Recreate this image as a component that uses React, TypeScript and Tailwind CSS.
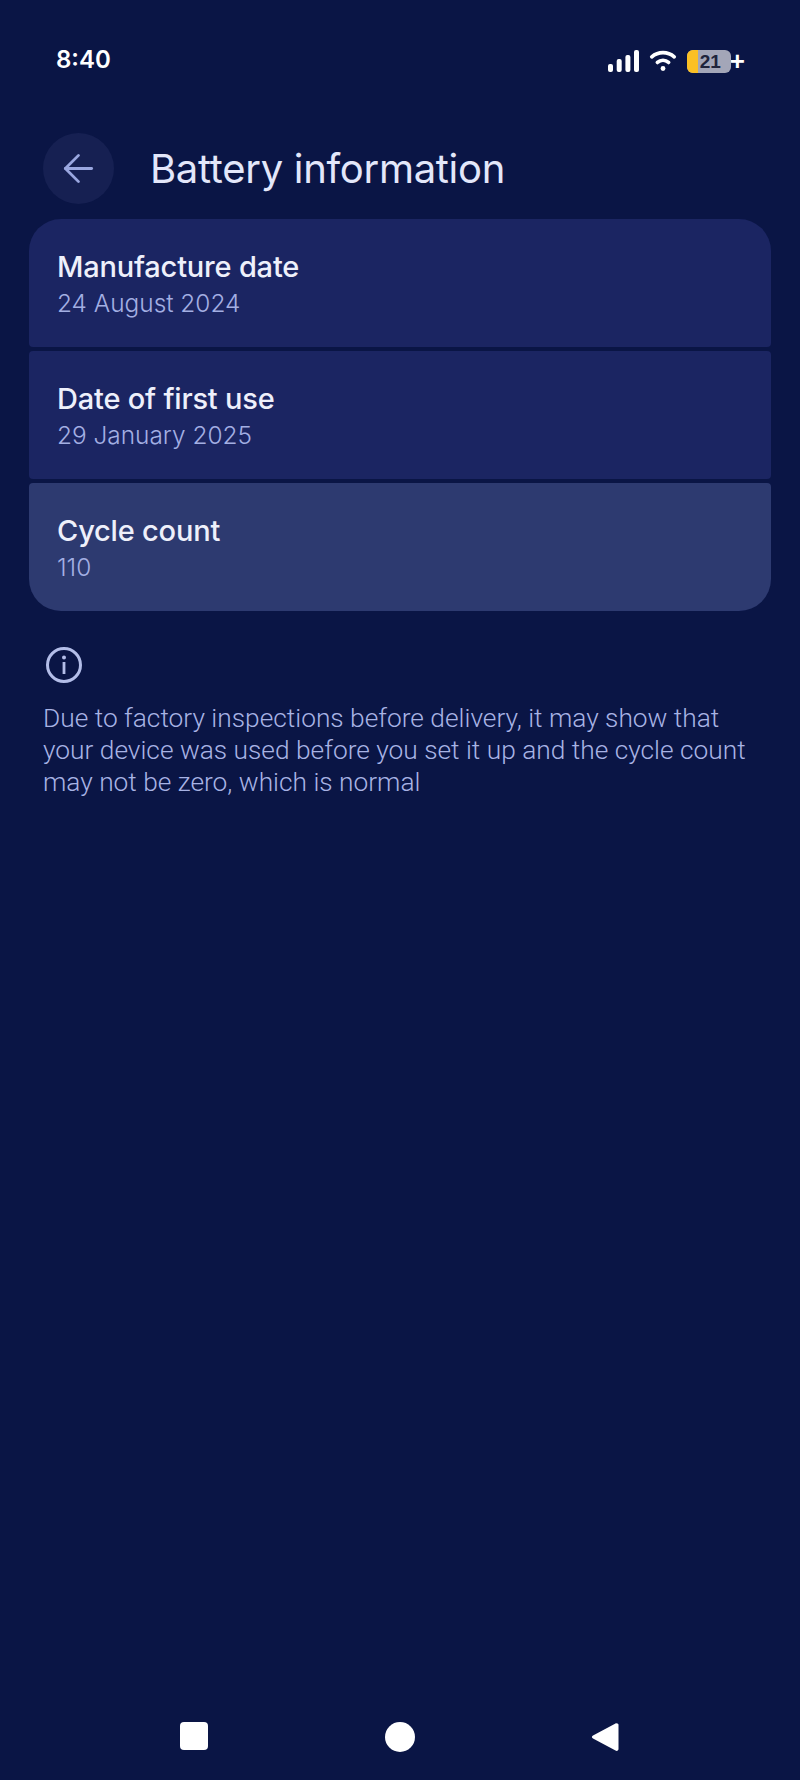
import { ArrowLeft } from "lucide-react";

const rows = [
  { title: "Manufacture date", value: "24 August 2024", shape: "rounded-t-[32px] rounded-b-[4px] bg-[#1b2562]" },
  { title: "Date of first use", value: "29 January 2025", shape: "rounded-[4px] bg-[#1b2562]" },
  { title: "Cycle count", value: "110", shape: "rounded-b-[32px] rounded-t-[4px] bg-[#2d3a70]" },
];

function StatusIcons() {
  return (
    <div className="flex items-center gap-[10px]">
      <svg width="31" height="24" viewBox="0 0 31 24" fill="#fff">
        <rect x="0" y="15" width="5" height="8" rx="2" />
        <rect x="8.7" y="10" width="5" height="13" rx="2" />
        <rect x="17.4" y="6" width="5" height="17" rx="2" />
        <rect x="26" y="1" width="5" height="22" rx="2" />
      </svg>
      <svg width="28" height="24" viewBox="0 0 30 24" fill="none" stroke="#fff" strokeWidth="4" strokeLinecap="round">
        <path d="M3 7.5C10 1.5 20 1.5 27 7.5" />
        <path d="M9 13.5C12.5 10.5 17.5 10.5 21 13.5" />
        <circle cx="15" cy="20" r="2.6" fill="#fff" stroke="none" />
      </svg>
      <div className="flex items-center">
        <div className="relative flex h-[23px] w-[44px] items-center justify-center overflow-hidden rounded-[6px] bg-[#a3a6b8]">
          <div className="absolute inset-y-0 left-0 w-[11px] bg-[#fbc024]" />
          <span className="relative pl-[3px] font-['Liberation_Sans',sans-serif] text-[19px] leading-none font-bold text-[#20243c]">21</span>
        </div>
        <span className="-ml-[1px] font-['Liberation_Sans',sans-serif] text-[26px] leading-none font-bold text-white">+</span>
      </div>
    </div>
  );
}

export default function App() {
  return (
    <div className="flex h-[1780px] w-[800px] flex-col bg-[#0a1545] font-['Inter',sans-serif]">
      <div className="flex h-[74px] items-end justify-between pr-[55px] pl-[56px]">
        <span className="text-[24px] leading-[29px] font-semibold text-white">8:40</span>
        <StatusIcons />
      </div>

      <div className="mt-[59px] flex items-center pl-[43px]">
        <div className="flex h-[71px] w-[71px] items-center justify-center rounded-full bg-[#162052]">
          <ArrowLeft size={45} strokeWidth={1.5} className="text-[#9aa7e0]" />
        </div>
        <h1 className="ml-[36px] text-[40px] leading-[44px] font-normal tracking-[-0.3px] text-[#e3e7fa]">Battery information</h1>
      </div>

      <div className="mt-[15px] flex flex-col gap-[4px] px-[29px]">
        {rows.map((row) => (
          <div key={row.title} className={`flex h-[128px] flex-col justify-center pt-[3px] pl-[28px] ${row.shape}`}>
            <span className="text-[29px] leading-[36px] font-medium tracking-[-0.2px] text-[#eef0fb]">{row.title}</span>
            <span className="text-[24.4px] leading-[36px] font-light text-[#a3afe3]">{row.value}</span>
          </div>
        ))}
      </div>

      <div className="mt-[35px] px-[43px]">
        <svg width="38" height="38" viewBox="0 0 38 38" fill="none" className="ml-[2px]">
          <circle cx="19" cy="19" r="16.5" stroke="#b3bde8" strokeWidth="3" />
          <rect x="17.6" y="16" width="2.8" height="12" fill="#b3bde8" />
          <circle cx="19" cy="11.5" r="2" fill="#b3bde8" />
        </svg>
        <p className="mt-[18px] w-[720px] font-['Roboto',sans-serif] text-[26.3px] leading-[32px] font-light text-[#a8b3e4]">
          Due to factory inspections before delivery, it may show that your device was used before you set it up and the cycle count may not be zero, which is normal
        </p>
      </div>

      <div className="mt-auto flex h-[90px] items-start justify-between pt-[32px] pr-[181px] pl-[180px]">
        <div className="h-[28px] w-[28px] rounded-[4px] bg-white" />
        <div className="h-[30px] w-[30px] rounded-full bg-white" />
        <svg width="28" height="30" viewBox="0 0 28 30" fill="#fff">
          <path d="M26 1.5C27 1.5 27.5 2 27.5 3V27C27.5 28.5 26 29.5 24.5 28.5L2 16.5C0.5 15.5 0.5 14.5 2 13.5L24.5 1.5C25 1.2 25.5 1.5 26 1.5Z" />
        </svg>
      </div>
    </div>
  );
}
